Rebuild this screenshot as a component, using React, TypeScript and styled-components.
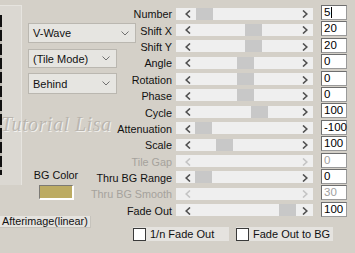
import React from 'react';
import styled, { createGlobalStyle } from 'styled-components';

const Global = createGlobalStyle`
  html, body { margin: 0; padding: 0; background: #d4d0c8; }
  body { font-family: "Liberation Sans", Arial, sans-serif; }
`;

const Window = styled.div`
  position: relative;
  width: 355px;
  height: 253px;
  background: #d4d0c8;
  overflow: hidden;
  display: flex;
  flex-direction: column;
  font-family: "Liberation Sans", Arial, sans-serif;
  font-size: 10.8px;
  color: #111;
`;

const Main = styled.div`
  display: flex;
  height: 216px;
`;

const LeftSide = styled.div`
  width: 137px;
  display: flex;
`;

const PreviewPanel = styled.div`
  position: relative;
  width: 22px;
  height: 180px;
  margin-top: 5px;
  background: #dbd8d2;
  border-top: 1px solid #e6e4df;
  border-right: 1px solid #e6e4df;
  box-sizing: border-box;
`;

const PreviewEdge = styled.div`
  margin-top: 9px;
  margin-left: -4px;
  width: 6px;
  height: 160px;
  border-top: 1px solid #111;
  border-bottom: 1px solid #111;
  box-sizing: border-box;
  background: repeating-linear-gradient(
    to bottom,
    #111 0px,
    #111 11px,
    #bdbab3 11px,
    #bdbab3 14px
  );
  background-size: 2px 100%;
  background-position: right top;
  background-repeat: no-repeat;
`;

const Widgets = styled.div`
  display: flex;
  flex-direction: column;
  padding-left: 6px;
  padding-top: 23px;
`;

const Select = styled.div<{ $w: number; $h: number; $mt: number }>`
  display: flex;
  align-items: center;
  justify-content: space-between;
  box-sizing: border-box;
  width: ${p => p.$w}px;
  height: ${p => p.$h}px;
  margin-top: ${p => p.$mt}px;
  padding: 0 6px 0 4px;
  background: #e6e5e1;
  border: 1px solid #bab7b0;
  font-size: 11px;
`;

const Chevron = () => (
  <svg width="8" height="5" viewBox="0 0 8 5">
    <polyline points="0.5,0.5 4,4 7.5,0.5" fill="none" stroke="#707070" strokeWidth="1" />
  </svg>
);

const BgBlock = styled.div`
  display: flex;
  flex-direction: column;
  align-items: center;
  width: 44px;
  margin-left: 6px;
  margin-top: 75px;
`;

const BgLabel = styled.div`
  font-size: 10.8px;
  line-height: 12px;
  white-space: nowrap;
`;

const Swatch = styled.div`
  width: 35px;
  height: 15px;
  margin-top: 4px;
  box-sizing: border-box;
  background: #bcab62;
  border-top: 1px solid #7c7a74;
  border-left: 1px solid #7c7a74;
  border-right: 2px solid #fff;
  border-bottom: 2px solid #fff;
`;

const ParamTable = styled.div`
  flex: 1;
  display: grid;
  grid-template-columns: 35px 137px 30px;
  column-gap: 4px;
  grid-auto-rows: 16.4px;
  padding-top: 5px;
  align-content: start;
`;

const Label = styled.div<{ $disabled?: boolean }>`
  display: flex;
  justify-content: flex-end;
  align-items: center;
  padding-top: 2px;
  white-space: nowrap;
  color: ${p => (p.$disabled ? '#a5a29c' : '#111')};
  position: relative;
  z-index: 2;
`;

const Track = styled.div<{ $disabled?: boolean }>`
  position: relative;
  height: 12px;
  margin-top: 2.5px;
  background: #efefef;
  color: ${p => (p.$disabled ? '#c4c4c4' : '#505050')};
`;

const Arrow = styled.svg<{ $side: 'left' | 'right' }>`
  position: absolute;
  top: 2.5px;
  ${p => (p.$side === 'left' ? 'left: 9px;' : 'left: 126px;')}
`;

const Thumb = styled.div`
  position: absolute;
  top: 0;
  width: 17px;
  height: 12px;
  background: #c8c8c8;
`;

const ValueBox = styled.div<{ $disabled?: boolean }>`
  box-sizing: border-box;
  height: 15px;
  margin-left: 4px;
  background: #fff;
  border: 1px solid #6e6e6e;
  border-right-color: #9a9a9a;
  border-bottom-color: #9a9a9a;
  padding-left: 2px;
  font-size: 11.5px;
  line-height: 13px;
  color: ${p => (p.$disabled ? '#a0a0a0' : '#000')};
  display: flex;
  align-items: center;
`;

const Caret = styled.span`
  display: inline-block;
  width: 1px;
  height: 11px;
  margin-left: 1px;
  background: #000;
`;

const Bottom = styled.div`
  display: flex;
  align-items: flex-start;
`;

const Tab = styled.div`
  box-sizing: border-box;
  width: 91px;
  height: 12px;
  padding-left: 2px;
  background: #e5e3df;
  border-bottom: 1px solid #c6c3bc;
  border-right: 1px solid #c6c3bc;
  font-size: 10.8px;
  line-height: 11px;
  white-space: nowrap;
`;

const CheckRow = styled.div`
  display: flex;
  gap: 7px;
  margin-left: 42px;
  margin-top: 11px;
`;

const CheckItem = styled.div<{ $w: number }>`
  display: flex;
  align-items: center;
  width: ${p => p.$w}px;
  height: 14px;
  background: #e5e3df;
  font-size: 11px;
  white-space: nowrap;
`;

const Box = styled.span`
  box-sizing: border-box;
  width: 13px;
  height: 13px;
  margin-right: 4px;
  background: #fff;
  border: 1px solid #3a3a3a;
`;

const Watermark = styled.div`
  position: absolute;
  z-index: 1;
  left: 1px;
  top: 113px;
  font-family: "Liberation Serif", serif;
  font-style: italic;
  font-size: 20px;
  letter-spacing: 0.5px;
  color: rgba(175, 170, 163, 0.75);
  text-shadow: 1px 1px 0 rgba(255, 255, 255, 0.7);
  white-space: nowrap;
  pointer-events: none;
`;

type Param = {
  label: string;
  value: string;
  thumb?: number;
  disabled?: boolean;
  caret?: boolean;
};

const params: Param[] = [
  { label: 'Number', value: '5', thumb: 196, caret: true },
  { label: 'Shift X', value: '20', thumb: 245 },
  { label: 'Shift Y', value: '20', thumb: 245 },
  { label: 'Angle', value: '0', thumb: 237 },
  { label: 'Rotation', value: '0', thumb: 237 },
  { label: 'Phase', value: '0', thumb: 237 },
  { label: 'Cycle', value: '100', thumb: 251 },
  { label: 'Attenuation', value: '-100', thumb: 195 },
  { label: 'Scale', value: '100', thumb: 216 },
  { label: 'Tile Gap', value: '0', disabled: true },
  { label: 'Thru BG Range', value: '0', thumb: 195 },
  { label: 'Thru BG Smooth', value: '30', disabled: true },
  { label: 'Fade Out', value: '100', thumb: 279 },
];

const SLIDER_LEFT = 176;

export default function App() {
  return (
    <>
      <Global />
      <Window>
        <Watermark>Tutorial Lisa</Watermark>
        <Main>
          <LeftSide>
            <PreviewPanel>
              <PreviewEdge />
            </PreviewPanel>
            <Widgets>
              <Select $w={108} $h={20} $mt={0}>
                <span>V-Wave</span>
                <Chevron />
              </Select>
              <Select $w={89} $h={19} $mt={6}>
                <span>(Tile Mode)</span>
                <Chevron />
              </Select>
              <Select $w={89} $h={21} $mt={5}>
                <span>Behind</span>
                <Chevron />
              </Select>
              <BgBlock>
                <BgLabel>BG Color</BgLabel>
                <Swatch />
              </BgBlock>
            </Widgets>
          </LeftSide>
          <ParamTable>
            {params.map(p => (
              <React.Fragment key={p.label}>
                <Label $disabled={p.disabled}>{p.label}</Label>
                <Track $disabled={p.disabled}>
                  <Arrow $side="left" width="6" height="8" viewBox="0 0 6 8">
                    <polyline points="5,0.5 1.2,4 5,7.5" fill="none" stroke="currentColor" strokeWidth="1.6" />
                  </Arrow>
                  {p.thumb !== undefined && <Thumb style={{ left: p.thumb - SLIDER_LEFT }} />}
                  <Arrow $side="right" width="6" height="8" viewBox="0 0 6 8">
                    <polyline points="1,0.5 4.8,4 1,7.5" fill="none" stroke="currentColor" strokeWidth="1.6" />
                  </Arrow>
                </Track>
                <ValueBox $disabled={p.disabled}>
                  {p.value}
                  {p.caret && <Caret />}
                </ValueBox>
              </React.Fragment>
            ))}
          </ParamTable>
        </Main>
        <Bottom>
          <Tab>Afterimage(linear)</Tab>
          <CheckRow>
            <CheckItem $w={96}>
              <Box />
              1/n Fade Out
            </CheckItem>
            <CheckItem $w={97}>
              <Box />
              Fade Out to BG
            </CheckItem>
          </CheckRow>
        </Bottom>
      </Window>
    </>
  );
}
